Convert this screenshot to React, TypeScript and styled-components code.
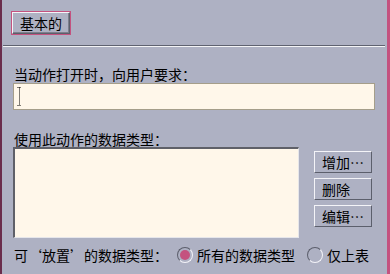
import styled, { createGlobalStyle } from 'styled-components'

const GlobalStyle = createGlobalStyle`
  body {
    margin: 0;
    font-family: "Noto Sans CJK SC", "Noto Sans", sans-serif;
  }
`

const Frame = styled.div`
  width: 390px;
  height: 274px;
  box-sizing: border-box;
  background: #aeb1c3;
  border-left: 2px solid #6a2d4c;
  border-right: 3px solid #c4527f;
  display: flex;
  flex-direction: column;
  color: #000;
  font-size: 14px;
  overflow: hidden;
`

const TabBar = styled.div`
  display: flex;
  padding: 11px 0 0 9px;
`

const Bevel = styled.button`
  box-sizing: border-box;
  display: flex;
  align-items: center;
  background: #aeb1c3;
  font-family: inherit;
  font-size: 14px;
  line-height: 16px;
  color: #000;
  margin: 0;
  border-style: solid;
  border-width: 1px;
  border-color: #f4f4f8 #5c5f6c #5c5f6c #f4f4f8;
`

const TabButton = styled(Bevel)`
  width: 60px;
  height: 24px;
  justify-content: center;
  padding: 0;
  outline: 1px solid #c4527f;
  outline-offset: 0;
  border-width: 1px;
  box-shadow: inset -1px -1px 0 #7c7f8c;
  width: 58px;
  height: 22px;
  margin: 1px;
`

const Separator = styled.div`
  margin: 10px 2px 0 1px;
  border-top: 1px solid #5f6270;
  border-bottom: 1px solid #f4f4f6;
`

const Body = styled.div`
  display: flex;
  flex-direction: column;
  padding-left: 11px;
`

const Label = styled.div<{ $top: number }>`
  margin-top: ${(p) => p.$top}px;
  padding-left: 1px;
  line-height: 16px;
  white-space: nowrap;
`

const Field = styled.div`
  margin-top: 1px;
  width: 362px;
  height: 27px;
  box-sizing: border-box;
  background: #fff7ea;
  border: 1px solid #a59e8a;
  display: flex;
  align-items: center;
  padding-left: 3px;
`

const ListRow = styled.div`
  display: flex;
  gap: 15px;
`

const ListBox = styled.div`
  width: 286px;
  height: 91px;
  box-sizing: border-box;
  background: #fff7ea;
  border-style: solid;
  border-width: 2px 1px 1px 2px;
  border-color: #5f6068 #e6e6ea #e6e6ea #5f6068;
`

const ButtonColumn = styled.div`
  display: flex;
  flex-direction: column;
  gap: 5px;
  padding-top: 4px;
`

const SideButton = styled(Bevel)`
  width: 58px;
  height: 22px;
  padding: 0 0 0 7px;
  justify-content: flex-start;
  white-space: nowrap;
`

const BottomRow = styled.div`
  display: flex;
  align-items: center;
  margin-top: 9px;
  height: 16px;
`

const RadioOption = styled.label<{ $gap: number }>`
  display: flex;
  align-items: center;
  gap: 4px;
  margin-left: ${(p) => p.$gap}px;
  line-height: 16px;
  white-space: nowrap;
`

const RadioCircle = styled.span<{ $on?: boolean }>`
  width: 16px;
  height: 16px;
  box-sizing: border-box;
  border-radius: 50%;
  border: 1px solid;
  border-color: #5c5f6c #f4f4f8 #f4f4f8 #5c5f6c;
  display: flex;
  align-items: center;
  justify-content: center;
  &::after {
    content: '';
    display: ${(p) => (p.$on ? 'block' : 'none')};
    width: 10px;
    height: 10px;
    border-radius: 50%;
    background: #c4527f;
  }
`

const Caret = () => (
  <svg width="5" height="19" viewBox="0 0 5 19">
    <path d="M0.5 0.5 H4.5 M2.5 0.5 V18.5 M0.5 18.5 H4.5" stroke="#000" strokeWidth="1" strokeDasharray="1 1" fill="none" />
  </svg>
)

export default function App() {
  return (
    <>
      <GlobalStyle />
      <Frame>
        <TabBar>
          <TabButton>基本的</TabButton>
        </TabBar>
        <Separator />
        <Body>
          <Label $top={19}>当动作打开时，向用户要求：</Label>
          <Field>
            <Caret />
          </Field>
          <Label $top={21}>使用此动作的数据类型：</Label>
          <ListRow>
            <ListBox />
            <ButtonColumn>
              <SideButton>增加…</SideButton>
              <SideButton>删除</SideButton>
              <SideButton>编辑…</SideButton>
            </ButtonColumn>
          </ListRow>
          <BottomRow>
            <Label $top={0}>可‘放置’的数据类型：</Label>
            <RadioOption $gap={9}>
              <RadioCircle $on />
              所有的数据类型
            </RadioOption>
            <RadioOption $gap={12}>
              <RadioCircle />
              仅上表
            </RadioOption>
          </BottomRow>
        </Body>
      </Frame>
    </>
  )
}
